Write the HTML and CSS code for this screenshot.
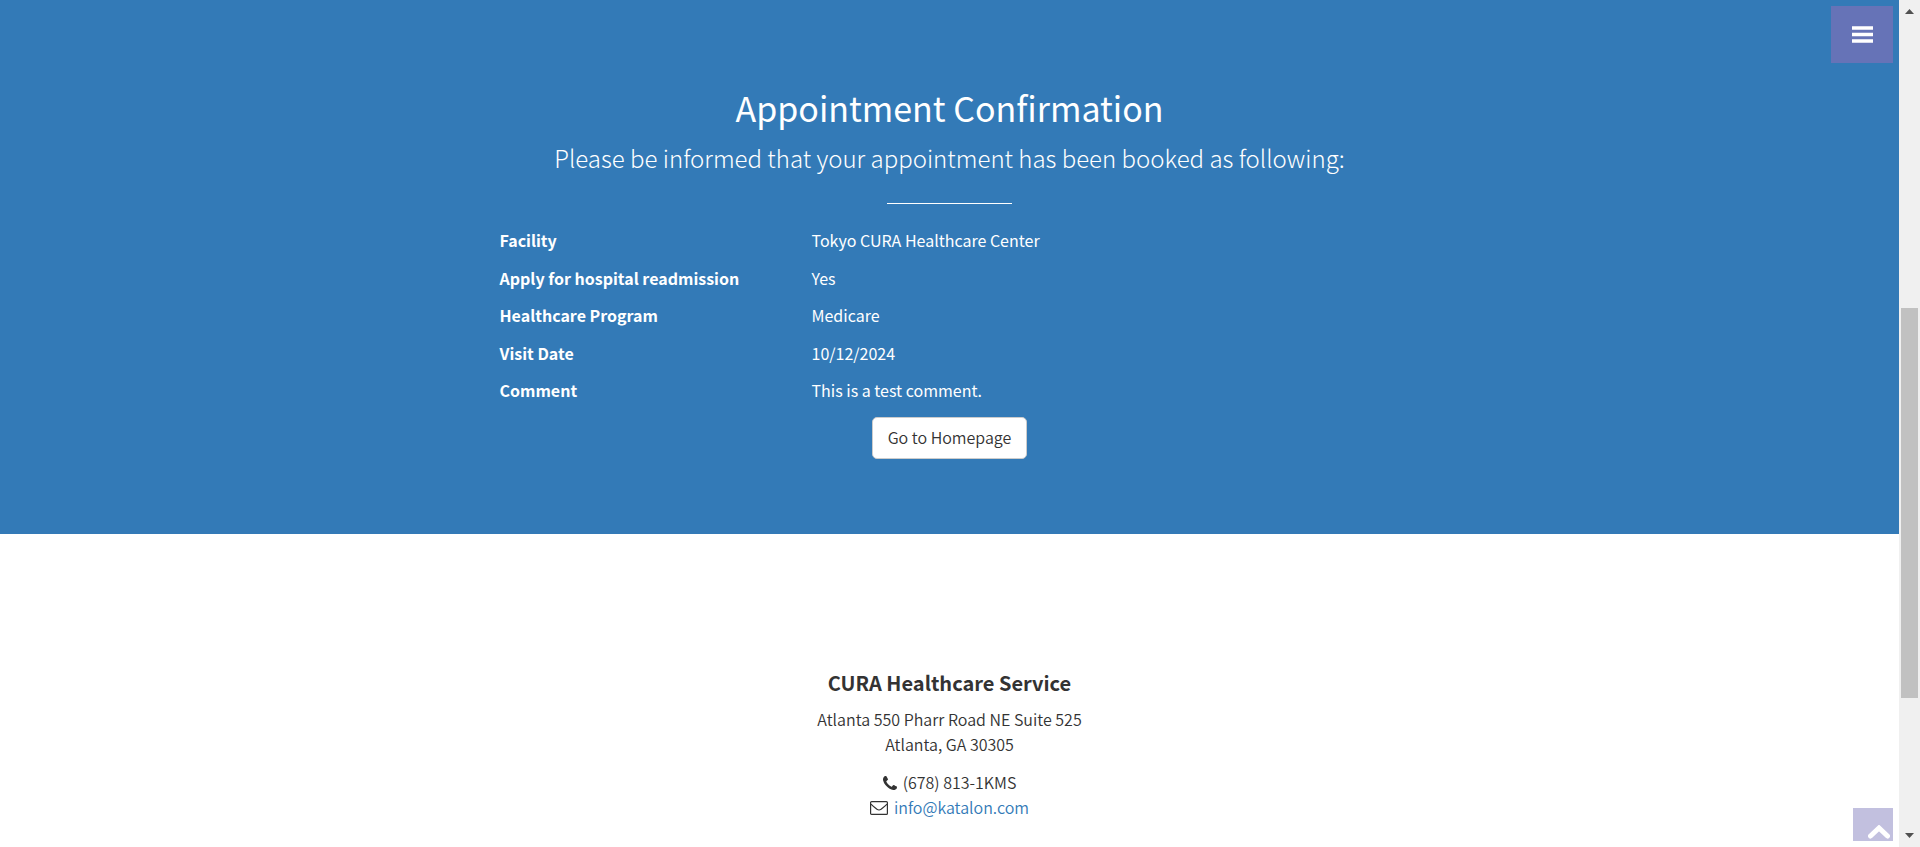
FILE: index.html
```html
<!DOCTYPE html>
<html lang="en">
<head>
<meta charset="utf-8">
<title>CURA Healthcare Service</title>
<link rel="stylesheet" href="styles.css">
</head>
<body>
<div class="page">
  <main class="summary">
    <h2 class="summary-title">Appointment Confirmation</h2>
    <p class="lead">Please be informed that your appointment has been booked as following:</p>
    <hr class="rule">
    <dl class="details">
      <dt>Facility</dt><dd>Tokyo CURA Healthcare Center</dd>
      <dt>Apply for hospital readmission</dt><dd>Yes</dd>
      <dt>Healthcare Program</dt><dd>Medicare</dd>
      <dt>Visit Date</dt><dd>10/12/2024</dd>
      <dt>Comment</dt><dd>This is a test comment.</dd>
    </dl>
    <a class="home-link" href="#home">Go to Homepage</a>
  </main>
  <footer class="footer">
    <h4 class="footer-title">CURA Healthcare Service</h4>
    <p class="address">Atlanta 550 Pharr Road NE Suite 525<br>Atlanta, GA 30305</p>
    <ul class="contacts">
      <li class="contact">
        <svg class="phone-icon" viewBox="0 0 1408 1408" aria-hidden="true"><path d="M1408 1112q0 27-10 70.500t-21 68.500q-21 50-122 106-94 51-186 51-27 0-53-3.500t-57.500-12.500-47-14.500-55.500-20.500-49-18q-98-35-175-83-127-79-264-216t-216-264q-48-77-83-175-3-9-18-49t-20.500-55.500-14.500-47-12.500-57.500-3.500-53q0-92 51-186 56-101 106-122 25-11 68.500-21t70.500-10q14 0 21 3 18 6 53 76 11 19 30 54t35 63.500 31 53.500q3 4 17.500 25t21.500 35.500 7 28.500q0 20-28.500 50t-62 55-62 53-28.500 46q0 9 5 22.500t8.500 20.500 14 24 11.500 19q76 137 174 235t235 174q2 1 19 11.500t24 14 20.500 8.500 22.500 5q18 0 46-28.500t53-62 55-62 50-28.500q14 0 28.500 7t35.500 21.500 25 17.500q25 15 53.500 31t63.500 35 54 30q70 35 76 53 3 7 3 21z"/></svg>
        <span>(678) 813-1KMS</span>
      </li>
      <li class="contact">
        <svg class="mail-icon" viewBox="0 0 18 14" aria-hidden="true"><rect x=".6" y=".6" width="16.800" height="12.800" rx="1"/><path d="M1 3.200C3 5.500 5 6.700 7 8.300q2 1.400 4 0C13 6.700 15 5.500 17 3.200"/></svg>
        <a href="mailto:info@katalon.com">info@katalon.com</a>
      </li>
    </ul>
  </footer>
</div>
<button class="menu-button" type="button" aria-label="Menu">
  <svg viewBox="0 0 21 17" aria-hidden="true"><path d="M0 .2h21v3.600H0zM0 6.700h21v3.600H0zM0 13.200h21v3.600H0z"/></svg>
</button>
<a class="to-top" href="#top" aria-label="Back to top">
  <svg viewBox="0 0 22 14" aria-hidden="true"><path d="M2.500 11 11 3l8.500 8"/></svg>
</a>
<div class="scrollbar" aria-hidden="true">
  <svg class="arrow" viewBox="0 0 9 5"><path d="M4.500 0 9 5H0z"/></svg>
  <div class="track"><div class="thumb"></div></div>
  <svg class="arrow" viewBox="0 0 9 5"><path d="M0 0h9L4.500 5z"/></svg>
</div>
</body>
</html>
```
FILE: styles.css
```css
* { box-sizing: border-box; }

body {
  margin: 0;
  height: 100vh;
  overflow: hidden;
  display: grid;
  grid-template-columns: 1fr 21px;
  font: 16px/25px "Noto Sans CJK SC", "Open Sans", sans-serif;
  font-weight: 350;
  color: #333;
  background: #fff;
}

h2, h4, p, dl, dd, ul { margin: 0; padding: 0; }
a { color: #337ab7; text-decoration: none; }

.page { min-width: 0; text-align: center; }

.summary {
  display: flex;
  flex-direction: column;
  align-items: center;
  padding: 87px 24px 75px;
  color: #fff;
  background: #337ab7;
}
.summary-title { font-size: 34px; line-height: 42px; font-weight: 400; }
.lead { margin-top: 11px; font-size: 24px; line-height: 36px; font-weight: 300; }
.rule { width: 125px; height: 1px; margin: 27px 0 24px; border: 0; background: #fff; }

.details {
  display: grid;
  grid-template-columns: 312px 1fr;
  align-content: space-between;
  width: 100%;
  max-width: 900px;
  min-height: 175px;
  text-align: left;
  font-weight: 400;
}
.details dt { font-weight: 700; }

.home-link {
  margin-top: 14px;
  padding: 6px 15px 8px;
  border: 1px solid #ccc;
  border-radius: 5px;
  line-height: 26px;
  color: #333;
  background: #fff;
}

.footer { padding: 136px 24px 0; }
.footer-title { font-size: 20px; line-height: 26px; font-weight: 700; }
.address { margin: 11px 0 13px; }
.contacts { list-style: none; }
.contact { display: flex; justify-content: center; align-items: center; gap: 6px; }
.phone-icon { width: 14px; height: 14px; fill: #333; }
.mail-icon { width: 18px; height: 14px; fill: none; stroke: #333; stroke-width: 1.2; }

.menu-button {
  position: fixed;
  top: 6px;
  right: 27px;
  display: grid;
  place-items: center;
  width: 62px;
  height: 57px;
  padding: 0;
  border: 0;
  background: #6673b7;
}
.menu-button svg { width: 21px; height: 17px; fill: #fff; }

.to-top {
  position: fixed;
  right: 27px;
  bottom: 6px;
  display: flex;
  justify-content: flex-end;
  align-items: flex-end;
  width: 40px;
  height: 33px;
  padding: 2px 3px;
  background: #c2c0df;
}
.to-top svg { width: 22px; height: 14px; fill: none; stroke: #fff; stroke-width: 5; stroke-linecap: round; }

.scrollbar {
  display: flex;
  flex-direction: column;
  align-items: center;
  justify-content: space-between;
  height: 100vh;
  padding: 9px 2px;
  background: #f0f0f0;
}
.arrow { width: 9px; height: 5px; fill: #505050; }
.track { flex: 1; width: 17px; padding-top: 294px; }
.thumb { height: 390px; background: #c1c1c1; }
```
